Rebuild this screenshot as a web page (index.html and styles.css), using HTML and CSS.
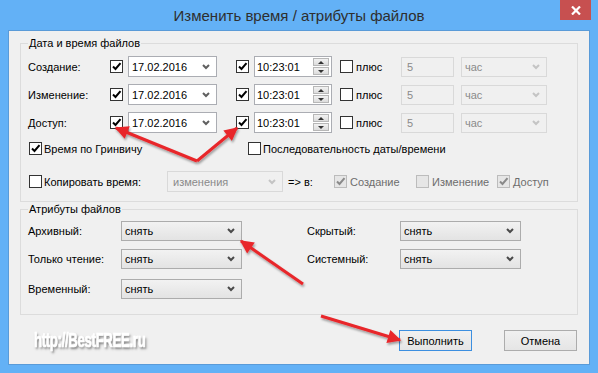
FILE: index.html
```html
<!DOCTYPE html>
<html lang="ru">
<head>
<meta charset="utf-8">
<title>Изменить время / атрибуты файлов</title>
<link rel="stylesheet" href="styles.css">
</head>
<body>
<div class="window">
  <div class="titlebar">
    <span class="title">Изменить время / атрибуты файлов</span>
    <div class="close"><svg width="10" height="9" viewBox="0 0 10 9"><path d="M1 0.5 L9 8.5 M9 0.5 L1 8.5" stroke="#fff" stroke-width="2.2"/></svg></div>
  </div>
  <div class="client">
    <fieldset class="group g1">
      <legend>Дата и время файлов</legend>
      <div class="rows">
        <div class="row r1">
          <span class="lbl">Создание:</span>
          <span class="cb on"><svg viewBox="0 0 11 11"><path d="M2 5.5 L4.5 8 L9.5 2.2"/></svg></span>
          <div class="combo date"><span>17.02.2016</span><svg class="chev" viewBox="0 0 8 6"><path d="M1 1 L4 4 L7 1"/></svg></div>
          <span class="cb on c2"><svg viewBox="0 0 11 11"><path d="M2 5.5 L4.5 8 L9.5 2.2"/></svg></span>
          <div class="time"><span>10:23:01</span><div class="spin"><span class="up"></span><span class="dn"></span></div></div>
          <span class="cb c3"></span>
          <span class="plus">плюс</span>
          <div class="field dis">5</div>
          <div class="combo unit dis"><span>час</span><svg class="chev" viewBox="0 0 8 6"><path d="M1 1 L4 4 L7 1"/></svg></div>
        </div>
        <div class="row r2">
          <span class="lbl">Изменение:</span>
          <span class="cb on"><svg viewBox="0 0 11 11"><path d="M2 5.5 L4.5 8 L9.5 2.2"/></svg></span>
          <div class="combo date"><span>17.02.2016</span><svg class="chev" viewBox="0 0 8 6"><path d="M1 1 L4 4 L7 1"/></svg></div>
          <span class="cb on c2"><svg viewBox="0 0 11 11"><path d="M2 5.5 L4.5 8 L9.5 2.2"/></svg></span>
          <div class="time"><span>10:23:01</span><div class="spin"><span class="up"></span><span class="dn"></span></div></div>
          <span class="cb c3"></span>
          <span class="plus">плюс</span>
          <div class="field dis">5</div>
          <div class="combo unit dis"><span>час</span><svg class="chev" viewBox="0 0 8 6"><path d="M1 1 L4 4 L7 1"/></svg></div>
        </div>
        <div class="row r3">
          <span class="lbl">Доступ:</span>
          <span class="cb on"><svg viewBox="0 0 11 11"><path d="M2 5.5 L4.5 8 L9.5 2.2"/></svg></span>
          <div class="combo date"><span>17.02.2016</span><svg class="chev" viewBox="0 0 8 6"><path d="M1 1 L4 4 L7 1"/></svg></div>
          <span class="cb on c2"><svg viewBox="0 0 11 11"><path d="M2 5.5 L4.5 8 L9.5 2.2"/></svg></span>
          <div class="time"><span>10:23:01</span><div class="spin"><span class="up"></span><span class="dn"></span></div></div>
          <span class="cb c3"></span>
          <span class="plus">плюс</span>
          <div class="field dis">5</div>
          <div class="combo unit dis"><span>час</span><svg class="chev" viewBox="0 0 8 6"><path d="M1 1 L4 4 L7 1"/></svg></div>
        </div>
        <div class="row r4">
          <div class="opt gmt">
            <span class="cb on"><svg viewBox="0 0 11 11"><path d="M2 5.5 L4.5 8 L9.5 2.2"/></svg></span>
            <span class="otext">Время по Гринвичу</span>
          </div>
          <div class="opt">
            <span class="cb"></span>
            <span class="otext">Последовательность даты/времени</span>
          </div>
        </div>
        <div class="row r5">
          <div class="opt copy">
            <span class="cb"></span>
            <span class="otext">Копировать время:</span>
          </div>
          <div class="combo src dis"><span>изменения</span><svg class="chev" viewBox="0 0 8 6"><path d="M1 1 L4 4 L7 1"/></svg></div>
          <span class="to">=&gt; в:</span>
          <div class="citem w1"><span class="cb dis"><svg viewBox="0 0 11 11"><path d="M2 5.5 L4.5 8 L9.5 2.2"/></svg></span><span class="ctext">Создание</span></div>
          <div class="citem w2"><span class="cb dis"></span><span class="ctext">Изменение</span></div>
          <div class="citem"><span class="cb dis"><svg viewBox="0 0 11 11"><path d="M2 5.5 L4.5 8 L9.5 2.2"/></svg></span><span class="ctext">Доступ</span></div>
        </div>
      </div>
    </fieldset>
    <fieldset class="group g2">
      <legend>Атрибуты файлов</legend>
      <div class="arows">
        <div class="arow a1">
          <div class="apair"><span class="alabel">Архивный:</span><div class="combo attr"><span>снять</span><svg class="chev" viewBox="0 0 8 6"><path d="M1 1 L4 4 L7 1"/></svg></div></div>
          <div class="apair"><span class="alabel">Скрытый:</span><div class="combo attr"><span>снять</span><svg class="chev" viewBox="0 0 8 6"><path d="M1 1 L4 4 L7 1"/></svg></div></div>
        </div>
        <div class="arow a2">
          <div class="apair"><span class="alabel">Только чтение:</span><div class="combo attr"><span>снять</span><svg class="chev" viewBox="0 0 8 6"><path d="M1 1 L4 4 L7 1"/></svg></div></div>
          <div class="apair"><span class="alabel">Системный:</span><div class="combo attr"><span>снять</span><svg class="chev" viewBox="0 0 8 6"><path d="M1 1 L4 4 L7 1"/></svg></div></div>
        </div>
        <div class="arow a3">
          <div class="apair"><span class="alabel">Временный:</span><div class="combo attr"><span>снять</span><svg class="chev" viewBox="0 0 8 6"><path d="M1 1 L4 4 L7 1"/></svg></div></div>
        </div>
      </div>
    </fieldset>
    <div class="footer">
      <span class="watermark">http://BestFREE.ru</span>
      <div class="buttons">
        <button class="btn focus">Выполнить</button>
        <button class="btn">Отмена</button>
      </div>
    </div>
  </div>
  <svg class="arrows" width="598" height="373" viewBox="0 0 598 373">
    <defs>
      <marker id="ah" viewBox="0 0 10 10" refX="9" refY="5" markerWidth="5.5" markerHeight="4.5" orient="auto">
        <path d="M0 0 L10 5 L0 10 z" fill="#e8262a"/>
      </marker>
      <filter id="sh" x="-20%" y="-20%" width="140%" height="140%">
        <feDropShadow dx="1" dy="2" stdDeviation="1.2" flood-color="#000" flood-opacity="0.35"/>
      </filter>
    </defs>
    <g stroke="#e8262a" stroke-width="3" fill="none" filter="url(#sh)" marker-end="url(#ah)">
      <line x1="197" y1="161" x2="116" y2="128"/>
      <line x1="197" y1="161" x2="237" y2="128"/>
      <line x1="303" y1="284" x2="241" y2="241"/>
      <line x1="321" y1="316" x2="400" y2="340"/>
    </g>
  </svg>
</div>
</body>
</html>
```

FILE: styles.css
```css
body {
  margin: 0;
  width: 598px;
  height: 373px;
  overflow: hidden;
  font-family: "Liberation Sans", Arial, sans-serif;
  font-size: 11px;
  color: #000;
}

.window {
  position: relative;
  width: 598px;
  height: 373px;
  background: #63b1f6;
  display: flex;
  flex-direction: column;
}

.titlebar {
  height: 30px;
  display: grid;
  grid-template-columns: 1fr auto 1fr;
  align-items: center;
}

.title {
  grid-column: 2;
  font-size: 15px;
  color: #2e2e2e;
}

.close {
  grid-column: 3;
  justify-self: end;
  align-self: start;
  width: 31px;
  height: 20px;
  margin-right: 7px;
  background: #c75050;
  display: flex;
  align-items: center;
  justify-content: center;
}

.close svg { display: block; }

.client {
  margin: 0 8px;
  height: 335px;
  box-sizing: border-box;
  border: 1px solid #5a9bd8;
  background: #f0f0f0;
  padding: 5px 11px 0;
  display: flex;
  flex-direction: column;
}

.group {
  margin: 0;
  padding: 0 0 0 7px;
  border: 1px solid #dcdcdc;
  min-width: 0;
}

.group legend {
  padding: 0 1px;
  line-height: 14px;
  font-size: 11px;
}

.rows {
  display: flex;
  flex-direction: column;
}

.row {
  display: flex;
  align-items: center;
  height: 21px;
}

.r1 { margin-top: 6px; }
.r2, .r3 { margin-top: 7px; }
.r4 { margin-top: 5px; }
.r5 { margin-top: 12px; }
.g1 { padding-bottom: 9px; }

.lbl { width: 82px; flex: none; }

.cb {
  width: 13px;
  height: 13px;
  box-sizing: border-box;
  border: 1px solid #333;
  background: #fff;
  flex: none;
  display: flex;
  align-items: center;
  justify-content: center;
}

.cb svg {
  width: 11px;
  height: 11px;
  display: block;
}

.cb svg path {
  fill: none;
  stroke: #000;
  stroke-width: 2;
}

.cb.dis {
  border-color: #bcbcbc;
  background: #e6e6e6;
}

.cb.dis svg path { stroke: #8a8a8a; }

.c2 { margin-left: 19px; }
.c3 { margin-left: 8px; }

.combo {
  height: 21px;
  box-sizing: border-box;
  border: 1px solid #abadb3;
  background: #fff;
  display: flex;
  align-items: center;
  justify-content: space-between;
  padding: 0 6px 0 3px;
  flex: none;
}

.chev {
  width: 8px;
  height: 6px;
  display: block;
}

.chev path {
  fill: none;
  stroke: #606060;
  stroke-width: 2;
}

.combo.dis {
  background: #f0f0f0;
  border-color: #d9d9d9;
  color: #8a8a8a;
}

.combo.dis .chev path { stroke: #c4c4c4; }

.date {
  width: 89px;
  margin-left: 5px;
}

.time {
  width: 78px;
  height: 21px;
  margin-left: 5px;
  box-sizing: border-box;
  border: 1px solid #abadb3;
  background: #fff;
  display: flex;
  align-items: center;
  justify-content: space-between;
  padding: 0 2px 0 2px;
  flex: none;
}

.spin {
  width: 16px;
  height: 17px;
  display: flex;
  flex-direction: column;
  gap: 1px;
}

.spin span {
  flex: 1;
  background: linear-gradient(#f2f2f2, #dcdcdc);
  border: 1px solid #b7b7b7;
  display: flex;
  align-items: center;
  justify-content: center;
}

.spin .up::after {
  content: "";
  border-left: 3px solid transparent;
  border-right: 3px solid transparent;
  border-bottom: 3px solid #333;
}

.spin .dn::after {
  content: "";
  border-left: 3px solid transparent;
  border-right: 3px solid transparent;
  border-top: 3px solid #333;
}

.plus {
  width: 45px;
  margin-left: 3px;
  flex: none;
}

.field {
  width: 53px;
  height: 20px;
  box-sizing: border-box;
  border: 1px solid #d9d9d9;
  padding-left: 5px;
  display: flex;
  align-items: center;
  flex: none;
}

.field.dis { color: #8a8a8a; }

.unit {
  width: 86px;
  height: 20px;
  margin-left: 7px;
}

.opt {
  display: flex;
  align-items: center;
  margin-left: 1px;
  flex: none;
}

.otext { margin-left: 2px; }

.gmt { width: 218px; }
.copy { width: 138px; }

.src {
  width: 116px;
  height: 21px;
  padding-left: 5px;
}

.to {
  width: 46px;
  margin-left: 5px;
  flex: none;
}

.citem {
  display: flex;
  align-items: center;
  color: #6d6d6d;
  flex: none;
}

.citem.w1 { width: 82px; }
.citem.w2 { width: 81px; }
.ctext { margin-left: 3px; }

.g2 { padding-bottom: 15px; }

.arows {
  display: flex;
  flex-direction: column;
}

.arow {
  display: flex;
  height: 20px;
  align-items: center;
}

.a1 { margin-top: 5px; }
.a2 { margin-top: 8px; }
.a3 { margin-top: 10px; }

.apair {
  display: flex;
  align-items: center;
  width: 279px;
  flex: none;
}

.alabel { width: 93px; flex: none; }

.attr {
  width: 121px;
  height: 20px;
  border-color: #acacac;
  background: linear-gradient(#f2f2f2, #e3e3e3);
}

.attr .chev path { stroke: #4a4a4a; }

.footer {
  display: flex;
  align-items: center;
  margin-top: 15px;
  height: 21px;
}

.watermark {
  display: inline-block;
  margin-left: 14px;
  font-family: "Liberation Sans", Arial, sans-serif;
  font-weight: bold;
  font-size: 20px;
  letter-spacing: -0.5px;
  color: #fff;
  -webkit-text-stroke: 0.7px #fff;
  text-shadow: 2px 2px 3px rgba(0, 0, 0, 0.5);
  transform: scaleX(0.66);
  transform-origin: left center;
}

.buttons {
  margin-left: auto;
  margin-right: 1px;
  display: flex;
  gap: 32px;
}

.btn {
  width: 73px;
  height: 21px;
  box-sizing: border-box;
  border: 1px solid #acacac;
  background: linear-gradient(#f0f0f0, #e5e5e5);
  font-family: "Liberation Sans", Arial, sans-serif;
  font-size: 11px;
  color: #000;
  padding: 0;
}

.btn.focus { border-color: #3c8fe0; }

.arrows {
  position: absolute;
  left: 0;
  top: 0;
  pointer-events: none;
}
```
